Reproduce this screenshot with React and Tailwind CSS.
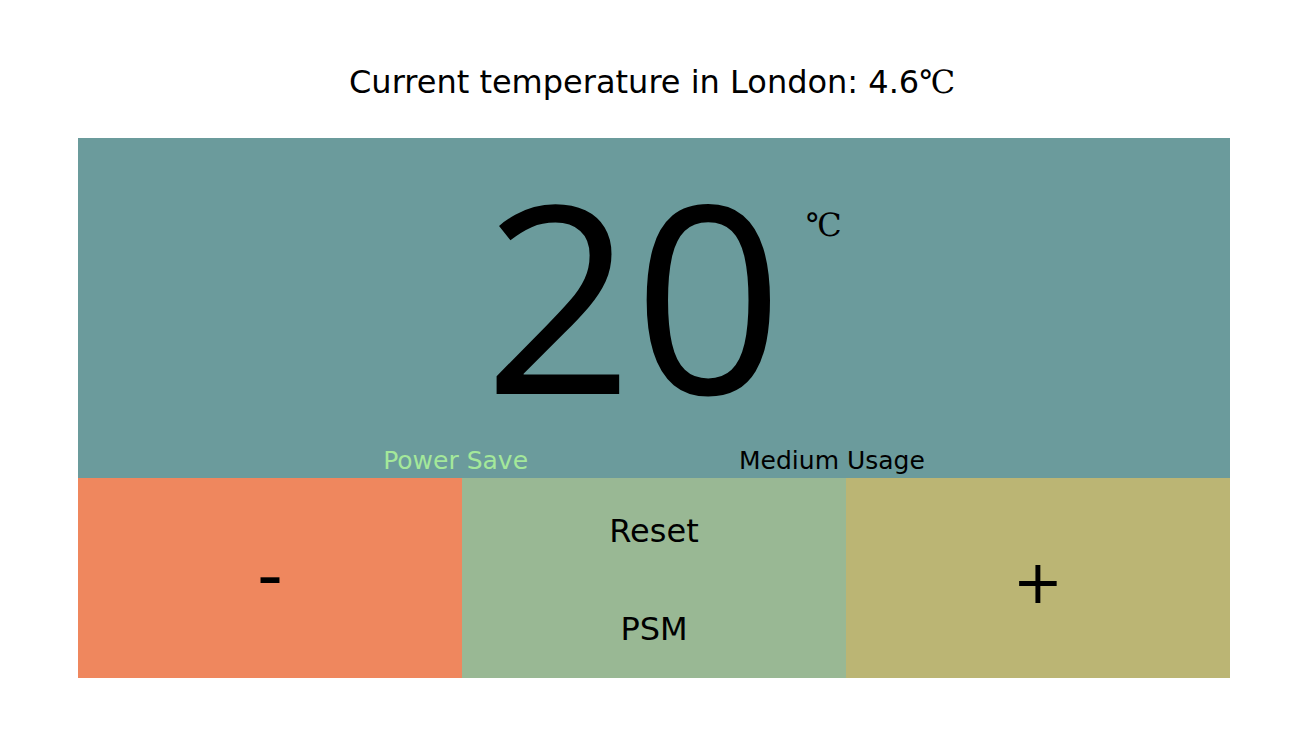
export default function App() {
  const serif = { fontFamily: '"Liberation Serif", "DejaVu Serif", serif' };

  return (
    <div className="w-[1304px] h-[740px] bg-white font-['DejaVu_Sans',_Verdana,_sans-serif] text-black">
      <div className="pt-[62px] h-[138px] text-center text-[32px] leading-[40px]">
        Current temperature in London: 4.6<span style={serif}>℃</span>
      </div>

      <div className="mx-[78px] w-[1152px]">
        <div className="bg-[#6b9b9c] h-[340px] flex flex-col">
          <div className="flex-1 flex justify-center items-start pt-[24px] pr-[41px]">
            <div className="relative">
              <span className="font-['Open_Sans',_sans-serif] text-[262px] leading-[262px] block">20</span>
              <span className="absolute left-[322px] top-[43px] text-[32px] leading-[40px]" style={serif}>℃</span>
            </div>
          </div>
          <div className="flex justify-center gap-[211px] text-[25px] leading-[30px] pb-[2px]">
            <span className="text-[#a4e89a]">Power Save</span>
            <span>Medium Usage</span>
          </div>
        </div>

        <div className="grid grid-cols-3 h-[200px]">
          <button className="bg-[#ef875e] flex items-center justify-center text-[72px] leading-none pb-[6px]">-</button>
          <div className="bg-[#99b894] flex flex-col items-center justify-around text-[32px] pt-[4px]">
            <button>Reset</button>
            <button>PSM</button>
          </div>
          <button className="bg-[#bbb574] flex items-center justify-center text-[60px] leading-none pt-[8px]">+</button>
        </div>
      </div>
    </div>
  );
}
